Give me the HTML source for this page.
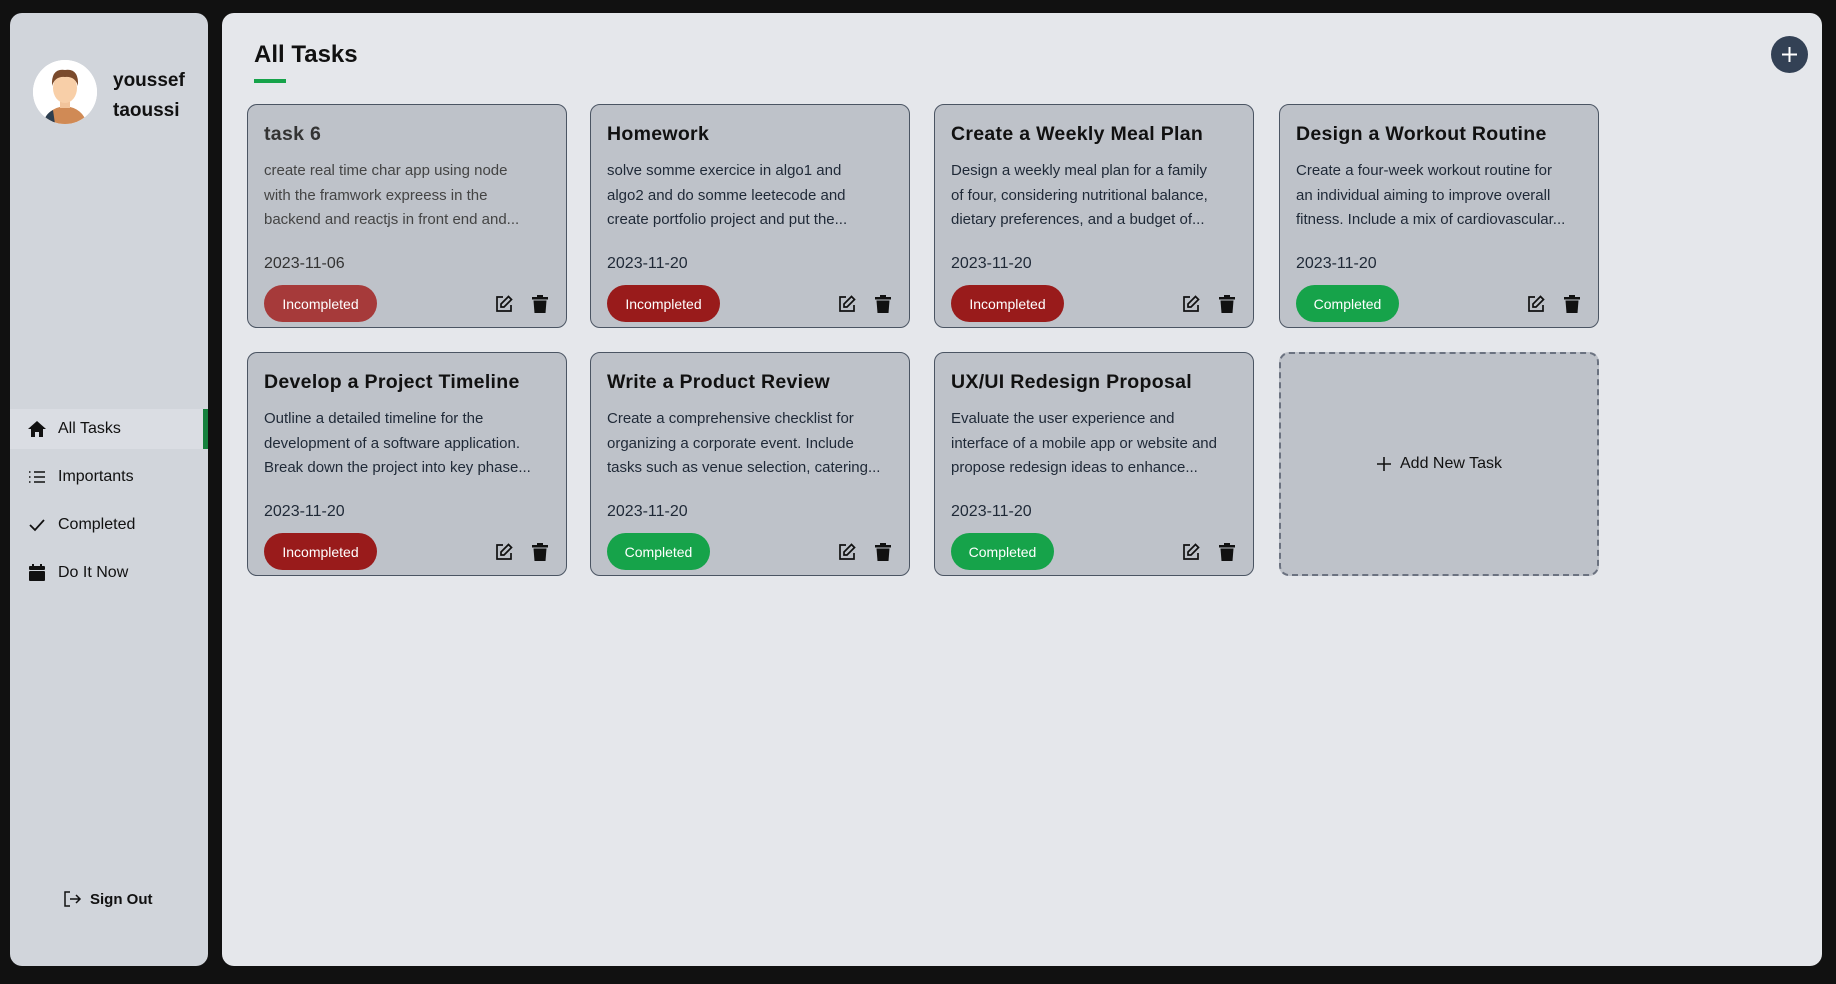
<!DOCTYPE html>
<html><head><meta charset="utf-8"><style>
*{box-sizing:border-box;margin:0;padding:0}
body{width:1836px;height:984px;background:#111;font-family:"Liberation Sans",sans-serif;position:relative;overflow:hidden;color:#111}
.side{position:absolute;left:10px;top:13px;width:198px;height:953px;background:#d1d5db;border-radius:12px}
.main{position:absolute;left:222px;top:13px;width:1600px;height:953px;background:#e5e7eb;border-radius:12px}
.avatar{position:absolute;left:23px;top:47px;width:64px;height:64px;border-radius:50%;background:#fff;overflow:hidden}
.name{position:absolute;left:103px;top:53px;font-size:19px;font-weight:bold;line-height:30px}
.nav{position:absolute;left:0;width:198px;height:40px;display:flex;align-items:center;font-size:16px}
.nav.active{background:#dadde3}
.nav.active:after{content:"";position:absolute;right:0;top:0;width:5px;height:40px;background:#15803d}
.nav svg{position:absolute;left:17px}
.nav span{position:absolute;left:48px}
.signout{position:absolute;left:52px;top:876px;font-size:15px;font-weight:bold;display:flex;align-items:center;gap:8px}
h1{position:absolute;left:32px;top:28px;font-size:24px;font-weight:bold;color:#111}
.ul{position:absolute;left:32px;top:66px;width:32px;height:4px;background:#16a34a}
.plus{position:absolute;left:1549px;top:23px;width:37px;height:37px;border-radius:50%;background:#334155}
.card{position:absolute;width:320px;height:224px;background:#bec2c9;border:1px solid #4b5563;border-radius:10px}
.card .t{position:absolute;left:16px;top:18px;font-size:19.5px;font-weight:bold;letter-spacing:.3px;white-space:nowrap}
.card .d{position:absolute;left:16px;top:54px;font-size:15px;line-height:24.5px;color:#1f2937;white-space:nowrap}
.card .dt{position:absolute;left:16px;top:150px;font-size:16px;color:#1f2937}
.badge{position:absolute;left:16px;top:180px;height:37px;border-radius:19px;color:#fff;font-size:14px;display:flex;align-items:center;justify-content:center}
.inc{background:#991b1b;width:113px}.comp{background:#16a34a;width:103px}
.ic{position:absolute;top:189px}
.add{position:absolute;width:320px;height:224px;background:#bec2c9;border:2px dashed #6b7280;border-radius:10px;display:flex;align-items:center;justify-content:center;font-size:16px;gap:8px}
</style></head><body>
<div class="side">
 <div class="avatar"><svg width="64" height="64" viewBox="0 0 64 64"><rect width="64" height="64" fill="#fff"/><path d="M10 64 Q14 48 32 46 Q50 48 54 64Z" fill="#d08a55"/><path d="M10 64 Q12 54 20 50 L22 64Z" fill="#2c3e50"/><rect x="27" y="38" width="10" height="10" fill="#f2c49b"/><ellipse cx="32" cy="28" rx="12" ry="15" fill="#f8cfa8"/><path d="M19 26 Q18 8 32 10 Q46 8 45 26 Q42 16 32 17 Q22 16 19 26Z" fill="#7a4a2c"/></svg></div>
 <div class="name">youssef<br>taoussi</div>
 <div class="nav active" style="top:396px"><svg width="20" height="20" viewBox="0 0 20 20"><path d="M10 2 L1 10 H4 V18 H8 V13 H12 V18 H16 V10 H19Z" fill="#111"/></svg><span>All Tasks</span></div>
 <div class="nav" style="top:444px"><svg width="20" height="20" viewBox="0 0 20 20" stroke="#111" stroke-width="1.5"><path d="M7 5H18M7 10H18M7 15H18M2 5H3.5M2 10H3.5M2 15H3.5"/></svg><span>Importants</span></div>
 <div class="nav" style="top:492px"><svg width="20" height="20" viewBox="0 0 20 20"><path d="M3 10 L8 15 L17 5" fill="none" stroke="#111" stroke-width="1.8"/></svg><span>Completed</span></div>
 <div class="nav" style="top:540px"><svg width="20" height="20" viewBox="0 0 20 20" fill="#111"><rect x="5" y="1" width="2" height="4"/><rect x="13" y="1" width="2" height="4"/><rect x="2" y="3" width="16" height="4" rx="1"/><rect x="2" y="8" width="16" height="10" rx="1"/></svg><span>Do It Now</span></div>
 <div class="signout"><svg width="20" height="20" viewBox="0 0 20 20" fill="none" stroke="#111" stroke-width="1.5"><path d="M8 3H3V17H8M8 10H18M14 6L18 10L14 14"/></svg>Sign Out</div>
</div>
<div class="main">
 <h1>All Tasks</h1><div class="ul"></div>
 <div class="plus"><svg width="37" height="37" viewBox="0 0 37 37" stroke="#fff" stroke-width="2"><path d="M18.5 11V26M11 18.5H26"/></svg></div>

 <div class="card" style="left:25px;top:91px"><div class="t" style="color:#333;font-weight:600">task 6</div><div class="d" style="color:#444">create real time char app using node<br>with the framwork expreess in the<br>backend and reactjs in front end and...</div><div class="dt" style="color:#333">2023-11-06</div><div class="badge inc" style="background:#a63a3a">Incompleted</div>EDIT1</div>
 <div class="card" style="left:368px;top:91px"><div class="t">Homework</div><div class="d">solve somme exercice in algo1 and<br>algo2 and do somme leetecode and<br>create portfolio project and put the...</div><div class="dt">2023-11-20</div><div class="badge inc">Incompleted</div>EDIT1</div>
 <div class="card" style="left:712px;top:91px"><div class="t">Create a Weekly Meal Plan</div><div class="d">Design a weekly meal plan for a family<br>of four, considering nutritional balance,<br>dietary preferences, and a budget of...</div><div class="dt">2023-11-20</div><div class="badge inc">Incompleted</div>EDIT1</div>
 <div class="card" style="left:1057px;top:91px"><div class="t">Design a Workout Routine</div><div class="d">Create a four-week workout routine for<br>an individual aiming to improve overall<br>fitness. Include a mix of cardiovascular...</div><div class="dt">2023-11-20</div><div class="badge comp">Completed</div>EDIT1</div>

 <div class="card" style="left:25px;top:339px"><div class="t">Develop a Project Timeline</div><div class="d">Outline a detailed timeline for the<br>development of a software application.<br>Break down the project into key phase...</div><div class="dt">2023-11-20</div><div class="badge inc">Incompleted</div>EDIT1</div>
 <div class="card" style="left:368px;top:339px"><div class="t">Write a Product Review</div><div class="d">Create a comprehensive checklist for<br>organizing a corporate event. Include<br>tasks such as venue selection, catering...</div><div class="dt">2023-11-20</div><div class="badge comp">Completed</div>EDIT1</div>
 <div class="card" style="left:712px;top:339px"><div class="t">UX/UI Redesign Proposal</div><div class="d">Evaluate the user experience and<br>interface of a mobile app or website and<br>propose redesign ideas to enhance...</div><div class="dt">2023-11-20</div><div class="badge comp">Completed</div>EDIT1</div>
 <div class="add" style="left:1057px;top:339px"><svg width="16" height="16" viewBox="0 0 16 16" stroke="#111" stroke-width="1.6"><path d="M8 1V15M1 8H15"/></svg>Add New Task</div>
</div>
<script>
document.body.innerHTML=document.body.innerHTML.split('EDIT1').join('<svg class="ic" style="left:246px" width="20" height="20" viewBox="0 0 20 20" fill="none" stroke="#111" stroke-width="1.7"><path d="M9 3H3V17H17V11"/><path d="M14.5 2.5L17.5 5.5L10 13H7V10Z"/></svg><svg class="ic" style="left:283px" width="18" height="20" viewBox="0 0 18 20" fill="#111"><rect x="1" y="3" width="16" height="2.5"/><rect x="6" y="1" width="6" height="2"/><path d="M2.5 6.5H15.5L14.5 19H3.5Z"/></svg>');
</script>
</body></html>
